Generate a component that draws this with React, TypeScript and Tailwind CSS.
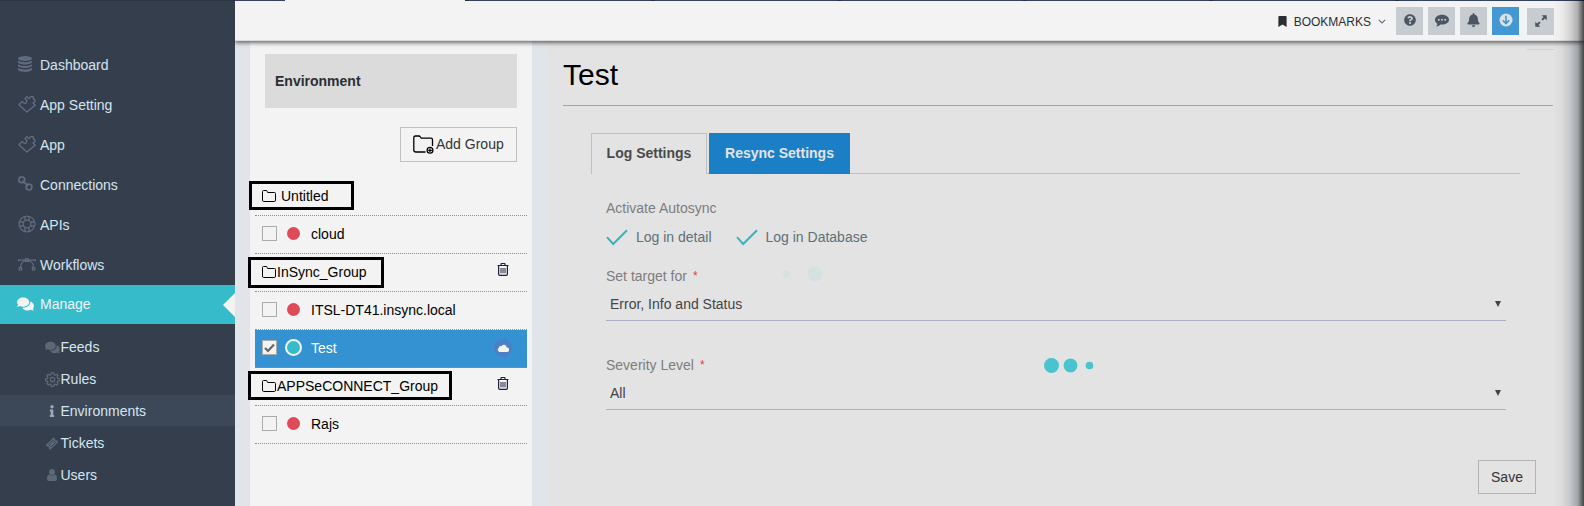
import React from "react";
import { FaComments, FaInfo, FaBookmark, FaQuestionCircle, FaBell } from "react-icons/fa";

type IconProps = { className?: string };

const DatabaseIcon = ({ className }: IconProps) => (
  <svg viewBox="0 0 14 16" className={className} fill="currentColor">
    <ellipse cx="7" cy="2.5" rx="7" ry="2.5" />
    <path d="M0 4.6c1.4 1.3 4 1.7 7 1.7s5.600-.4 7-1.700v1.600c0 1.200-3.100 2.200-7 2.200s-7-1-7-2.200z" />
    <path d="M0 8.200c1.400 1.300 4 1.700 7 1.700s5.600-.4 7-1.700v1.600c0 1.200-3.100 2.200-7 2.200s-7-1-7-2.200z" />
    <path d="M0 11.800c1.400 1.300 4 1.700 7 1.700s5.600-.4 7-1.700v1.800c0 1.300-3.100 2.400-7 2.400s-7-1.100-7-2.400z" />
  </svg>
);

const PuzzleIcon = ({ className }: IconProps) => (
  <svg viewBox="0 0 18 17" className={className} fill="none" stroke="currentColor" strokeWidth="1.4" strokeLinejoin="round">
    <path d="M.9 8.800 3.600 5.900c.6-.5 1.100-.3 1.500.4.700 1.100 2.300 1.300 3.200.3.900-1 .7-2.500-.5-3.100-.8-.4-1-.8-.4-1.400L8.500.9c.6-.3 1 .1 1.300.8.300.8 1.300.9 1.800.1.500-.9 1.400-1.200 2.400-1.200.9 0 1.400.3 1.600 1 .2.500-.1 1-.4 1.500.8.100 1.600.5 1.800 1.300.1 1-.4 1.600-1.200 1.900-.9.300-.9 1-.2 1.500l1.600 1.300L8.900 16z" />
  </svg>
);

const LinkIcon = ({ className }: IconProps) => (
  <svg viewBox="0 0 15 15" className={className} fill="none" stroke="currentColor" strokeWidth="1.700">
    <rect x="1" y="1" width="5.600" height="5.600" rx="2.400" transform="rotate(8 3.800 3.800)" />
    <rect x="8.200" y="8.200" width="5.600" height="5.600" rx="2.400" transform="rotate(8 11 11)" />
    <path d="m4.600 4.600 5.600 5.600" />
  </svg>
);

const RingIcon = ({ className }: IconProps) => (
  <svg viewBox="0 0 18 18" className={className} fill="none" stroke="currentColor" strokeWidth="1.300">
    <circle cx="9" cy="9" r="7.900" />
    <circle cx="9" cy="9" r="3.800" />
    <path d="M7 1.400v4.200M11 1.400v4.200M7 12.400v4.200M11 12.400v4.200M1.400 7h4.200M1.400 11h4.200M12.400 7h4.200M12.400 11h4.200" />
  </svg>
);

const CurveIcon = ({ className }: IconProps) => (
  <svg viewBox="0 0 18 13" className={className} fill="none" stroke="currentColor" strokeWidth="1.200">
    <path d="M1 2.200h16M2.500 10c0-4 2-7.500 6.500-7.500s6.500 3.500 6.500 7.500" />
    <rect x="7.600" y=".8" width="2.800" height="2.600" />
    <rect x="1.200" y="9.600" width="2.400" height="2.400" />
    <rect x="14.400" y="9.600" width="2.400" height="2.400" />
    <path d="M.6 1.200v2M17.400 1.200v2" />
  </svg>
);

const GearIcon = ({ className }: IconProps) => (
  <svg viewBox="0 0 16 16" className={className} fill="none" stroke="currentColor" strokeWidth="1.400" strokeLinejoin="round">
    <path d="M6.700 1h2.600l.4 1.900 1.200.5 1.700-1 1.400 1.500-1 1.700.5 1.200 1.900.4v1.900l-1.900.5-.5 1.200 1 1.600-1.500 1.500-1.600-1-1.200.5-.4 1.900H6.700l-.4-1.900-1.200-.5-1.700 1L2 12.400l1-1.600-.5-1.200L.6 9.200V7.200l1.900-.4L3 5.600 2 3.900l1.400-1.500 1.700 1 1.200-.5z" />
    <circle cx="8" cy="8.100" r="2.300" />
  </svg>
);

const TicketIcon = ({ className }: IconProps) => (
  <svg viewBox="0 0 14 14" className={className}>
    <path fill="currentColor" d="M8.300.8q.7-.6 1.300 0l1 1q-.5 1 .1 1.600t1.600.1l1 1q.6.600 0 1.300l-7.500 7.400q-.7.600-1.300 0l-1-1q.5-1-.1-1.600t-1.600-.1l-1-1q-.6-.6 0-1.300z" />
    <path fill="none" stroke="#353e4d" strokeWidth=".9" d="m8 3.500 2.600 2.600-4.500 4.500L3.500 8z" />
  </svg>
);

const UserIcon = ({ className }: IconProps) => (
  <svg viewBox="0 0 10 12" className={className} fill="currentColor">
    <circle cx="5" cy="3.100" r="3" />
    <path d="M2.400 5.500Q5 7.700 7.600 5.500 10 5.900 10 9.900 10 12 8 12H2q-2 0-2-2.100 0-4 2.400-4.400z" />
  </svg>
);

const FolderIcon = ({ className }: IconProps) => (
  <svg viewBox="0 0 14 12" className={className} fill="none" stroke="currentColor" strokeWidth="1">
    <path d="M.5 10V1.500q0-1 1-1h2.700q1 0 1 1v.2q0 .8.800.8h6.500q1 0 1 1V10q0 1.500-1 1.500H1.500q-1 0-1-1.500z" />
  </svg>
);

const FolderAddIcon = ({ className }: IconProps) => (
  <svg viewBox="0 0 21 19" className={className} fill="none" stroke="currentColor" strokeWidth="1.300">
    <path d="M12.500 17H3Q.8 17 .8 15V3Q.8 1 2.500 1h3.300q1 0 1.600 1l.8 1.200H18q1.500 0 1.500 1.500V11" />
    <circle cx="17" cy="15.300" r="2.900" />
    <path d="M15.200 15.300h3.600M17 13.500v3.600" strokeWidth="1.200" />
  </svg>
);

const TrashIcon = ({ className }: IconProps) => (
  <svg viewBox="0 0 12 13" className={className} fill="none" stroke="currentColor" strokeWidth="1">
    <path d="M.5 2.500h11M4 2.500v-1.200q0-.8.800-.8h2.400q.8 0 .8.800v1.200M1.600 2.500v8.500q0 1.400 1.100 1.400h6.600q1.100 0 1.100-1.400V2.500" strokeWidth="1.200" />
    <path d="M4 5v5.300M6 5v5.300M8 5v5.300" />
  </svg>
);

const ChatIcon = ({ className }: IconProps) => (
  <svg viewBox="0 0 14 13" className={className}>
    <path fill="currentColor" d="M7 .8c3.900 0 7 2.200 7 4.900s-3.100 4.900-7 4.900l-1.500-.1C4.300 11.700 2.900 12.400 1.100 12.500c.7-.8 1.200-1.700 1.300-2.800C.9 8.800 0 7.300 0 5.700 0 3 3.100.8 7 .8z" />
    <g fill="#c6cccf">
      <circle cx="3.800" cy="5.700" r="1" />
      <circle cx="7" cy="5.700" r="1" />
      <circle cx="10.200" cy="5.700" r="1" />
    </g>
  </svg>
);

const DownCircleIcon = ({ className }: IconProps) => (
  <svg viewBox="0 0 14 14" className={className}>
    <circle cx="7" cy="7" r="6.500" fill="#dcdfe4" />
    <path d="M7 2.800v7.600M3.800 7.400 7 10.600l3.200-3.200" fill="none" stroke="#4398d3" strokeWidth="1.600" />
  </svg>
);

const ExpandIcon = ({ className }: IconProps) => (
  <svg viewBox="0 0 12 12" className={className} fill="currentColor">
    <path d="M6.700.3h5v5L9.900 3.500 7.800 5.600 6.400 4.200l2.100-2.100zM5.300 11.700h-5v-5l1.800 1.800 2.100-2.100 1.400 1.400-2.100 2.100z" />
  </svg>
);

const CheckMark = ({ className }: IconProps) => (
  <svg viewBox="0 0 22 17" className={className} fill="none" stroke="#35b3bf" strokeWidth="2">
    <path d="m1 8.200 6.200 6.800L21 1.200" />
  </svg>
);

const mainNav = [
  { label: "Dashboard", icon: <DatabaseIcon className="mb-0.5 h-4 w-3.5" /> },
  { label: "App Setting", icon: <PuzzleIcon className="mb-0.5 h-[17px] w-[18px]" /> },
  { label: "App", icon: <PuzzleIcon className="mb-0.5 h-[17px] w-[18px]" /> },
  { label: "Connections", icon: <LinkIcon className="mb-[3px] h-[15px] w-[15px]" /> },
  { label: "APIs", icon: <RingIcon className="mb-0.5 h-[18px] w-[18px]" /> },
  { label: "Workflows", icon: <CurveIcon className="mb-0.5 h-[13px] w-[18px]" /> },
];

const subNav = [
  { label: "Feeds", icon: <FaComments className="h-[13px] w-[15px]" /> },
  { label: "Rules", icon: <GearIcon className="h-[15px] w-[15px]" /> },
  { label: "Environments", icon: <FaInfo className="h-3 w-3 text-[#a0a8b4]" />, active: true },
  { label: "Tickets", icon: <TicketIcon className="h-[13px] w-[14px]" /> },
  { label: "Users", icon: <UserIcon className="h-3 w-2.5" /> },
];

function Sidebar() {
  return (
    <aside className="flex h-full w-[235px] shrink-0 flex-col border-t border-[#2c3543] bg-[#353e4d] pt-11 text-sm text-[#d3e6f1]">
      {mainNav.map((n) => (
        <div key={n.label} className="flex h-10 shrink-0 items-center pl-[18px]">
          <span className="flex w-[22px] items-center text-[#5f6b7e]">{n.icon}</span>
          {n.label}
        </div>
      ))}
      <div className="flex h-[39px] shrink-0 items-center justify-between bg-[#35bbc9] pl-[17px] text-[#f3f3f3]">
        <span className="flex items-center pb-0.5">
          <span className="flex w-[23px]">
            <FaComments className="h-4 w-[17px]" />
          </span>
          Manage
        </span>
        <svg viewBox="0 0 12 24" className="h-6 w-3" fill="#f3f3f3">
          <path d="M12 0v24L0 12z" />
        </svg>
      </div>
      <div className="mt-[7px]">
        {subNav.map((n) => (
          <div key={n.label} className={n.active ? "flex h-8 items-center border-b border-[#353e4d] bg-[#3c4858] pl-11" : "flex h-8 items-center pl-11"}>
            <span className="flex w-4 items-center justify-center text-[#5d6877]">{n.icon}</span>
            <span className="pl-[0.5px]">{n.label}</span>
          </div>
        ))}
      </div>
    </aside>
  );
}

function Header() {
  const btn = "flex h-7 w-[27px] items-center justify-center bg-[#c6cccf] pb-0.5 text-[#4b5563]";
  return (
    <header className="relative z-10 flex h-[41px] shrink-0 flex-col border-b border-[#d8dadb] bg-[#f3f3f3] shadow-[0_2px_4px_rgba(0,0,0,0.55)]">
      <div className="flex h-px shrink-0">
        <div className="w-[50px] bg-[#34415f]" />
        <div className="w-[180px]" />
        <div className="flex grow gap-[182px] bg-[#34415f]">
          {[0, 1, 2, 3, 4, 5].map((i) => (
            <div key={i} className="w-1 bg-[#2a2c38]" />
          ))}
        </div>
      </div>
      <div className="flex items-start justify-end gap-[5px] pt-1.5 pr-[30px]">
        <div className="mr-[5px] flex h-7 items-center pt-px text-xs text-[#2a2e33]">
          <FaBookmark className="mr-[7px] h-[11px] w-[9px]" />
          BOOKMARKS
          <svg viewBox="0 0 8 5" className="ml-[7px] h-[5px] w-2" fill="none" stroke="#5b6e7e" strokeWidth="1.100">
            <path d="m.8.800 3.200 3.200L7.200.8" />
          </svg>
        </div>
        <div className={btn}><FaQuestionCircle className="h-3 w-3" /></div>
        <div className={btn}><ChatIcon className="h-[13px] w-3.5" /></div>
        <div className={btn}><FaBell className="h-[14px] w-[13px]" /></div>
        <div className="flex h-7 w-[27px] items-center justify-center bg-[#4398d3] pb-0.5"><DownCircleIcon className="h-3.5 w-3.5" /></div>
        <div className="mt-px ml-[3px] flex h-[27px] w-[27px] items-center justify-center bg-[#c6cccf] pb-0.5 text-[#4b5563]"><ExpandIcon className="h-3 w-3" /></div>
      </div>
    </header>
  );
}

function GroupRow({ name, spaced, boxClass, trash }: { name: string; spaced?: boolean; boxClass: string; trash?: boolean }) {
  return (
    <div className="relative flex h-[38px] items-center justify-between border-b border-dotted border-[#8f8f8f] pr-[18px] pb-0.5 pl-[7px]">
      <div className={boxClass} />
      <span className="relative flex items-center">
        <FolderIcon className={spaced ? "mr-[5px] h-3 w-3.5" : "mr-px h-3 w-3.5"} />
        {name}
      </span>
      {trash && <TrashIcon className="mb-1 h-[13px] w-3 text-[#1d2140]" />}
    </div>
  );
}

function EnvRow({ name, selected }: { name: string; selected?: boolean }) {
  return (
    <div className={selected ? "flex h-[38px] items-center border-b border-dotted border-[#8f8f8f] bg-[#3492d3] pr-[15px] pb-0.5 pl-[7px] text-white" : "flex h-[38px] items-center border-b border-dotted border-[#8f8f8f] pb-0.5 pl-[7px]"}>
      <div className="mb-2.5 flex h-[15px] w-[15px] items-center justify-center self-end border border-[#ababab] bg-[#f3f3f3]">
        {selected && (
          <svg viewBox="0 0 11 10" className="h-2.5 w-[11px]" fill="none" stroke="#666" strokeWidth="2.200">
            <path d="m1 5 3 3 6-6.500" />
          </svg>
        )}
      </div>
      <div className="flex w-[34px] items-center pl-2">
        {selected ? (
          <div className="h-[17px] w-[17px] rounded-full border-2 border-[#f3f3f3] bg-[#35bbc9]" />
        ) : (
          <div className="ml-[2px] h-[13px] w-[13px] rounded-full bg-[#dd4b57]" />
        )}
      </div>
      <span className="grow">{name}</span>
      {selected && (
        <div className="flex h-[18px] w-[18px] items-center justify-center rounded-full bg-[#4a80c4]">
          <svg viewBox="0 0 12 8" className="h-2 w-3" fill="#f3f3f3">
            <path d="M2.500 8A2.300 2.300 0 0 1 2 3.700 1.700 1.700 0 0 1 4.200 2.200 3 3 0 0 1 9.800 3.400 2.300 2.300 0 0 1 9.900 8z" />
          </svg>
        </div>
      )}
    </div>
  );
}

function EnvironmentPanel() {
  return (
    <section className="w-[282px] shrink-0 bg-[#f3f3f3] pt-[13px] text-sm text-black">
      <div className="mx-[15px] flex h-[54px] items-center bg-[#dbdbdb] pl-2.5 font-bold text-[#2a2e35]">Environment</div>
      <div className="mt-[19px] mr-[15px] flex justify-end">
        <button className="flex h-[35px] w-[117px] items-center border border-[#c0c0c0] pb-px pl-3 text-sm text-[#333]">
          <FolderAddIcon className="mr-[2px] h-[19px] w-[21px] text-black" />
          Add Group
        </button>
      </div>
      <div className="mx-[5px] mt-4">
        <GroupRow name="Untitled" spaced boxClass="absolute top-[3px] -left-1.5 h-[29px] w-[105px] border-3 border-black" />
        <EnvRow name="cloud" />
        <GroupRow name="InSync_Group" trash boxClass="absolute top-[3px] -left-[7px] h-[31px] w-[136px] border-3 border-black" />
        <EnvRow name="ITSL-DT41.insync.local" />
        <EnvRow name="Test" selected />
        <GroupRow name="APPSeCONNECT_Group" trash boxClass="absolute top-[3px] -left-[7px] h-[29px] w-[204px] border-3 border-black" />
        <EnvRow name="Rajs" />
      </div>
    </section>
  );
}

function SelectField({ label, value }: { label: string; value: string }) {
  return (
    <div className="h-[89px]">
      <div className="flex h-5 items-center text-[#7d7d7d]">
        {label}
        <span className="ml-[6px] text-xs text-[#d9433f]">*</span>
      </div>
      <div className="flex h-[35px] items-center justify-between border-b border-[#adb0c4] pt-[2px] pr-1 pl-1 text-[#444]">
        <span>{value}</span>
        <svg viewBox="0 0 8 6" className="h-1.5 w-2" fill="#444">
          <path d="M1 0h6L4 6z" />
        </svg>
      </div>
    </div>
  );
}

function SettingsPanel() {
  return (
    <main className="relative w-[1021px] shrink-0 bg-[#e3e3e3] pl-4 text-sm">
      <div className="absolute top-2 right-[14px] h-px w-[27px] bg-[#d0d0d0]" />
      <h1 className="mt-3 mr-[15px] flex h-[53px] border-b border-[#a5a5a5] text-[30px] leading-[43px] text-black">Test</h1>
      <div className="mt-[27px] ml-[28px] flex w-[929px] font-bold">
        <div className="flex h-[41px] w-[116px] items-center justify-center border border-b-0 border-[#c0c0c0] pb-[2px] text-[#4a4a4a]">Log Settings</div>
        <div className="w-[2px] border-b border-[#c0c0c0]" />
        <div className="flex h-[41px] w-[141px] items-center justify-center bg-[#1b7fc6] pb-px text-[#e3e3e3]">Resync Settings</div>
        <div className="grow border-b border-[#c0c0c0]" />
      </div>
      <div className="ml-[43px] w-[900px]">
        <div className="mt-6 flex h-5 items-center text-[#7d7d7d]">Activate Autosync</div>
        <div className="mt-[9px] flex h-5 items-center text-[#607078]">
          <CheckMark className="mr-2 h-[17px] w-[22px]" />
          Log in detail
          <CheckMark className="mr-2 ml-6 h-[17px] w-[22px]" />
          Log in Database
        </div>
        <div className="mt-[19px]">
          <SelectField label="Set target for" value="Error, Info and Status" />
          <SelectField label="Severity Level" value="All" />
        </div>
      </div>
      <div className="mt-4 flex justify-end pr-8">
        <button className="h-[34px] w-[58px] border border-[#b3b3b3] text-[#333]">Save</button>
      </div>
      <svg viewBox="0 0 320 110" className="pointer-events-none absolute top-[225px] left-[233px] h-[110px] w-[320px]">
        <g fill="#d5e0e1">
          <circle cx="6.500" cy="8" r="3.500" />
          <circle cx="35" cy="8" r="7.500" />
        </g>
        <g fill="#49c3cf">
          <circle cx="271.500" cy="99.500" r="7.500" />
          <circle cx="290.500" cy="99.500" r="6.900" />
          <circle cx="309.500" cy="99.500" r="3.800" />
        </g>
      </svg>
    </main>
  );
}

export default function App() {
  return (
    <div className="relative flex h-[506px] w-[1584px] overflow-hidden bg-[#e1e5e9] font-['Liberation_Sans',Arial,sans-serif]">
      <Sidebar />
      <div className="flex min-w-0 grow flex-col overflow-hidden">
        <Header />
        <div className="flex grow gap-[15px] pl-[15px]">
          <EnvironmentPanel />
          <SettingsPanel />
        </div>
      </div>
      <div className="pointer-events-none absolute inset-y-0 right-0 z-20 w-8 bg-[linear-gradient(to_right,rgba(0,0,0,0)_0%,rgba(0,0,0,0.03)_30%,rgba(0,0,0,0.12)_55%,rgba(0,0,0,0.28)_80%,rgba(0,0,0,0.7)_100%)]" />
    </div>
  );
}
